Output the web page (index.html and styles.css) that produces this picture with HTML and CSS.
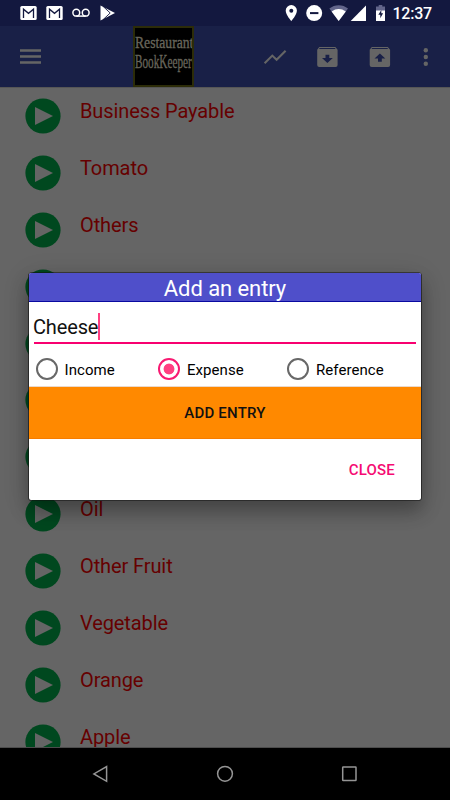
FILE: index.html
```html
<!DOCTYPE html>
<html lang="en">
<head>
<meta charset="utf-8">
<title>Restaurant BookKeeper</title>
<link rel="stylesheet" href="styles.css">
</head>
<body>
<svg class="defs" width="0" height="0"><defs>
<symbol id="play" viewBox="0 0 36 36"><circle cx="18" cy="18" r="17.6" fill="#00481f"/><path d="M10 9v18l18-9z" fill="#656565"/></symbol>
<symbol id="mail" viewBox="0 0 17 14"><rect x=".3" width="16.4" height="14" rx="1.6" fill="#fff"/><path d="M3.5 12V3.2l5 4.1 5-4.1V12" fill="none" stroke="#13183f" stroke-width="1.3"/></symbol>
</defs></svg>
<div class="screen">
  <header class="status">
    <svg width="450" height="26" viewBox="0 0 450 26">
      <use href="#mail" x="20" y="6" width="17" height="14"/>
      <use href="#mail" x="46" y="6" width="17" height="14"/>
      <g fill="none" stroke="#fff" stroke-width="1.5"><circle cx="76.3" cy="12.7" r="3.4"/><circle cx="85.7" cy="12.7" r="3.4"/><path d="M76.3 16.1h9.4"/></g>
      <path d="M100.5 5.5l14.5 7.5-14.5 7.5z" fill="#fff"/><path d="M103.2 6.5l7 6.5-7 6.5" fill="none" stroke="#13183f" stroke-width=".9"/>
      <path d="M291.3 5a5.6 5.6 0 0 0-5.6 5.6c0 4.2 5.6 10.6 5.6 10.6s5.6-6.4 5.6-10.6a5.6 5.6 0 0 0-5.6-5.6z" fill="#fff"/><circle cx="291.3" cy="10.7" r="2" fill="#13183f"/>
      <circle cx="314.2" cy="13.1" r="8" fill="#fff"/><path d="M310 13.1h8.4" stroke="#13183f" stroke-width="2"/>
      <path d="M329.4 8.6a14.5 14.5 0 0 1 18.6 0L338.7 21z" fill="#62658a"/><path d="M331.6 11.4q7.1-4.6 14.2 0L338.7 21z" fill="#fff"/>
      <path d="M366 5.5V21h-15.3z" fill="#fff"/>
      <path d="M376 12V6.5h2.7V5h3.6v1.5h2.7V12z" fill="#62658a"/><path d="M376 10.5h9V21h-9z" fill="#fff"/><path d="M381.3 10l-3 4.7h2v3.5l2.8-5h-1.8z" fill="#13183f"/>
    </svg>
    <time class="clock">12:37</time>
  </header>
  <nav class="toolbar">
    <svg class="menu" width="21" height="16" viewBox="0 0 21 16"><path d="M0 1.5h21M0 7.5h21M0 13.5h21" stroke="#656565" stroke-width="2.5"/></svg>
    <div class="logo"><span class="word first">Restaurant</span><span class="word second">BookKeeper</span></div>
    <svg class="actions" width="180" height="26" viewBox="260 44 180 26" fill="#656565">
      <path d="M264.6 63.2l7.7-7.6 4.3 4.2 9-9.1" fill="none" stroke="#656565" stroke-width="2.1"/>
      <path fill-rule="evenodd" d="M319.3 47h16l2.3 2.8V65a2 2 0 0 1-2 2h-16.4a2 2 0 0 1-2-2V49.8zM319.8 48l-.9 1h16.8l-.9-1zM325.5 54.8v3.2H322l5.4 5 5.4-5h-3.5v-3.2z"/>
      <path fill-rule="evenodd" d="M371.8 47h16l2.3 2.8V65a2 2 0 0 1-2 2h-16.4a2 2 0 0 1-2-2V49.8zM372.3 48l-.9 1h16.8l-.9-1zM379.9 53.6l-5.4 5h3.5v3.2h3.8v-3.2h3.5z"/>
      <circle cx="425.8" cy="50.2" r="2.2"/><circle cx="425.8" cy="57" r="2.2"/><circle cx="425.8" cy="63.8" r="2.2"/>
    </svg>
  </nav>
  <main class="list">
    <div class="row"><svg><use href="#play"/></svg><span>Business Payable</span></div>
    <div class="row"><svg><use href="#play"/></svg><span>Tomato</span></div>
    <div class="row"><svg><use href="#play"/></svg><span>Others</span></div>
    <div class="row"><svg><use href="#play"/></svg></div>
    <div class="row"><svg><use href="#play"/></svg></div>
    <div class="row"><svg><use href="#play"/></svg></div>
    <div class="row"><svg><use href="#play"/></svg></div>
    <div class="row"><svg><use href="#play"/></svg><span>Oil</span></div>
    <div class="row"><svg><use href="#play"/></svg><span>Other Fruit</span></div>
    <div class="row"><svg><use href="#play"/></svg><span>Vegetable</span></div>
    <div class="row"><svg><use href="#play"/></svg><span>Orange</span></div>
    <div class="row"><svg><use href="#play"/></svg><span>Apple</span></div>
  </main>
  <footer class="navbar">
    <svg width="450" height="52" viewBox="0 748 450 52" fill="none" stroke="#959595" stroke-width="1.5">
      <path d="M106.6 766.5v14.8l-12.7-7.4z"/><circle cx="225" cy="773.8" r="7.4"/><rect x="342.7" y="767.1" width="13.3" height="13.3" rx=".5"/>
    </svg>
  </footer>
  <section class="dialog">
    <h1>Add an entry</h1>
    <div class="field"><span>Cheese</span><i class="caret"></i></div>
    <div class="options">
      <label><i class="radio"></i>Income</label>
      <label><i class="radio on"></i>Expense</label>
      <label><i class="radio"></i>Reference</label>
    </div>
    <button class="add">ADD ENTRY</button>
    <button class="close">CLOSE</button>
  </section>
</div>
</body>
</html>
```
FILE: styles.css
```css
* { box-sizing: border-box; }
body { margin: 0; font-family: Roboto, "Liberation Sans", sans-serif; background: #000; }
.defs { position: absolute; }
svg { display: block; flex: none; }
.screen { position: relative; width: 450px; height: 800px; overflow: hidden; display: flex; flex-direction: column; background: #656565; }
.status { position: relative; height: 26px; flex: none; background: #13183f; }
.clock { position: absolute; right: 18px; top: 3px; font-size: 16px; line-height: 21px; letter-spacing: -.2px; font-weight: 500; color: #fff; }
.toolbar { height: 61px; flex: none; display: flex; align-items: center; padding: 0 10px 0 20px; background: #192047; }
.menu { margin-top: 1px; }
.logo { width: 61px; height: 61px; margin-left: 92px; border: 2px solid #2c2c08; background: #000; color: #68665c; font-family: "Liberation Serif", serif; overflow: hidden; }
.word { display: block; width: max-content; font-size: 15px; line-height: 20px; transform-origin: 0 50%; -webkit-text-stroke: .3px #68665c; }
.first { margin-top: 4px; transform: scale(.91, 1.1); }
.second { font-size: 17px; transform: scale(.66, 1.15); }
.actions { margin-left: auto; }
.list { flex: 1; min-height: 0; overflow: hidden; border-top: 1px solid #565656; border-bottom: 1px solid #4c4c4c; padding: 10px 0 0 25px; }
.row { display: flex; align-items: flex-start; gap: 19px; height: 56.9px; color: #660000; font-size: 20px; line-height: 26px; }
.row svg { width: 36px; height: 36px; }
.row span { letter-spacing: -.1px; }
.navbar { height: 52px; flex: none; background: #000; }
.dialog { position: absolute; left: 29px; top: 273px; width: 392px; height: 227px; display: flex; flex-direction: column; background: #fff; border-radius: 2px; overflow: hidden; box-shadow: 0 0 0 .6px #111, 0 11px 18px 1px rgba(0,0,0,.26), 0 5px 28px rgba(0,0,0,.14); }
.dialog h1 { height: 29px; margin: 0; border-bottom: 1px solid #0909a0; background: #4f4fca; color: #fff; font-size: 22px; line-height: 31px; letter-spacing: -.08px; font-weight: 400; text-align: center; }
.field { display: flex; align-items: center; height: 42px; margin: 0 5px; border-bottom: 2px solid #f80070; font-size: 20px; color: #111; }
.field span { margin: 10px 0 0 -1px; letter-spacing: -.15px; }
.caret { width: 2px; height: 27px; margin-top: 8px; background: #ff4081; }
.options { display: grid; grid-template-columns: 122.5px 129px 1fr; height: 43px; padding: 8px 0 0 6.5px; border-bottom: 1px solid #ead9cc; }
.options label { display: flex; align-items: center; gap: 7px; height: 35px; font-size: 15px; letter-spacing: .06px; color: #000; }
.radio { display: block; width: 22px; height: 22px; margin-top: -1px; border: 2px solid #686868; border-radius: 50%; }
.radio.on { border-color: #f81a72; background: radial-gradient(circle, #ff4081 5px, #fff 5.8px); }
button { border: 0; font: 500 15px Roboto, sans-serif; letter-spacing: .2px; }
.add { height: 52px; padding: 0; background: #ff8900; border-bottom: 1px solid #f67c00; color: #111; }
.close { align-self: flex-end; margin: 16px 18px 0 0; height: 30px; padding: 0 8px; background: transparent; color: #f50b72; }
```
